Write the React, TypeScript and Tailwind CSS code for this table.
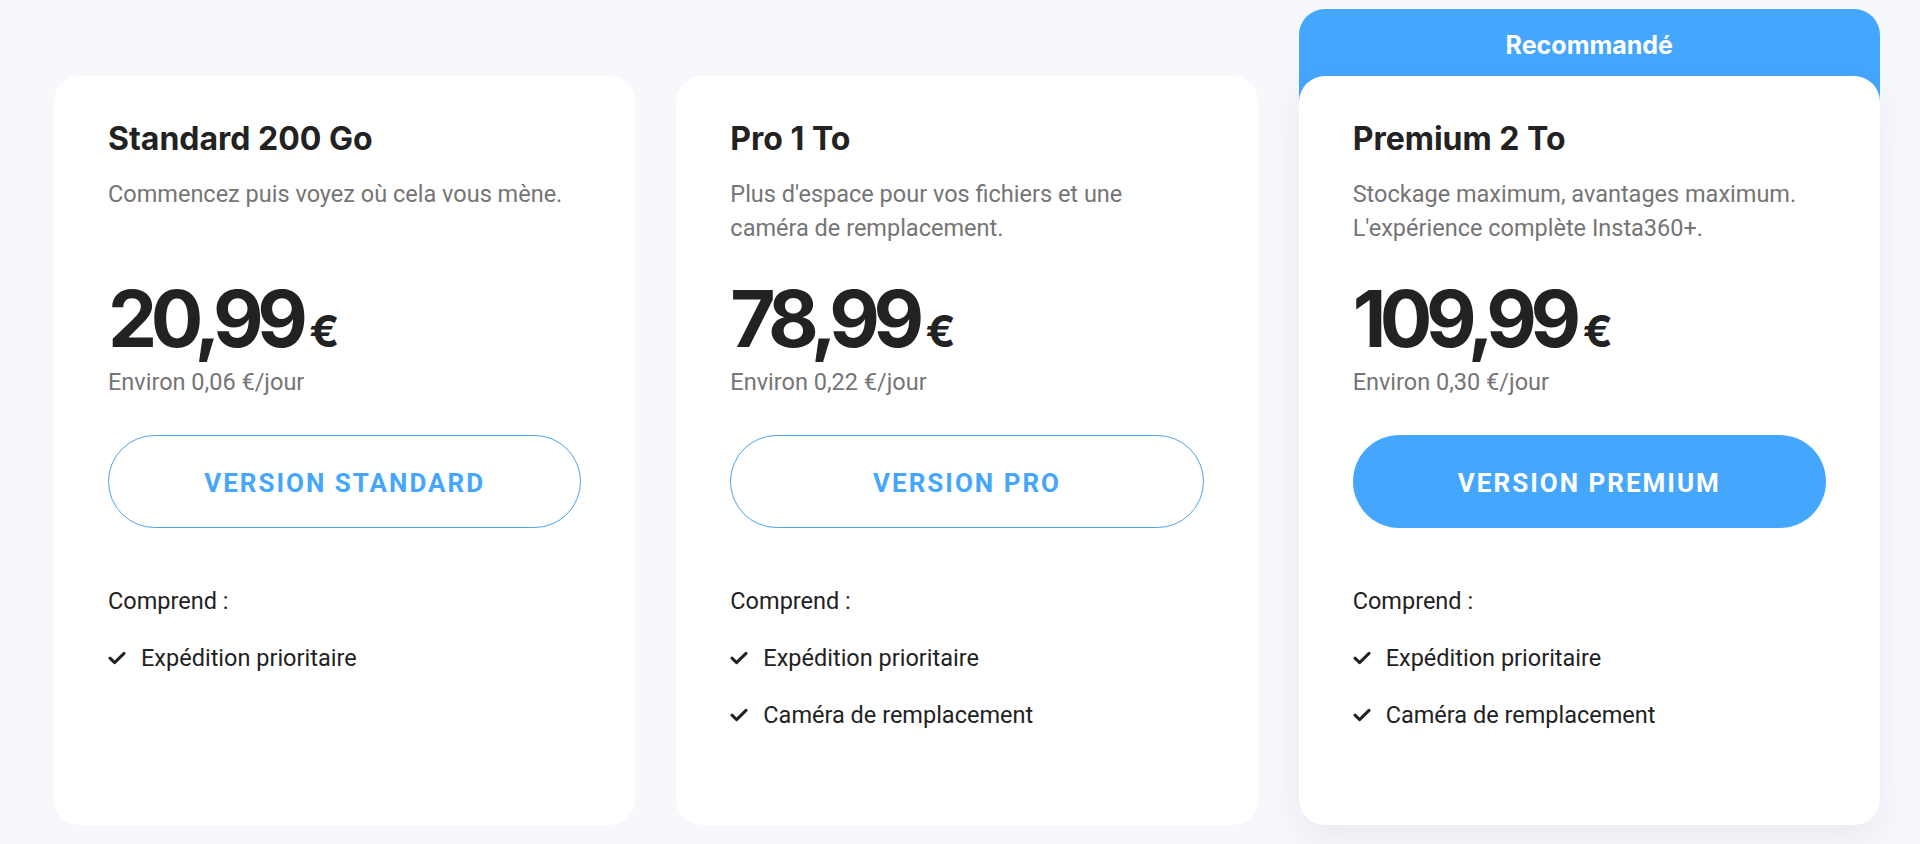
import React from "react";

const plans = [
  {
    id: 1,
    name: "Standard 200 Go",
    desc: "Commencez puis voyez où cela vous mène.",
    price: "20,99",
    perDay: "Environ 0,06 €/jour",
    cta: "VERSION STANDARD",
    features: ["Expédition prioritaire"],
    featured: false,
  },
  {
    id: 2,
    name: "Pro 1 To",
    desc: "Plus d'espace pour vos fichiers et une caméra de remplacement.",
    price: "78,99",
    perDay: "Environ 0,22 €/jour",
    cta: "VERSION PRO",
    features: ["Expédition prioritaire", "Caméra de remplacement"],
    featured: false,
  },
  {
    id: 3,
    name: "Premium 2 To",
    desc: "Stockage maximum, avantages maximum. L'expérience complète Insta360+.",
    price: "109,99",
    perDay: "Environ 0,30 €/jour",
    cta: "VERSION PREMIUM",
    features: ["Expédition prioritaire", "Caméra de remplacement"],
    featured: true,
  },
];

function Check() {
  return (
    <svg width="18" height="14" viewBox="0 0 18 14" fill="none" className="shrink-0">
      <path d="M2 7.2 L6.6 11.6 L16 2.4" stroke="#222" strokeWidth="3" strokeLinecap="round" strokeLinejoin="round" />
    </svg>
  );
}

type Plan = (typeof plans)[number];

function Card({ plan }: { plan: Plan }) {
  return (
    <div
      className={
        plan.featured
          ? "relative -mt-[26px] h-[749px] rounded-[26px] bg-white px-[54px] pt-[44px] shadow-[0_12px_36px_rgba(30,40,80,0.07)]"
          : "h-[749px] rounded-[26px] bg-white px-[54px] pt-[44px]"
      }
    >
      <h2 className="font-['Inter',sans-serif] text-[32px] leading-[38px] font-bold text-[#222]">{plan.name}</h2>
      <p className="mt-[19px] h-[68px] font-['Roboto',sans-serif] text-[23.5px] leading-[34px] text-[#757575]">
        {plan.desc}
      </p>
      <div className="mt-[35px] flex items-baseline font-['Inter',sans-serif] font-bold text-[#222]">
        <span className="text-[78px] leading-[78px] tracking-[-6.5px]">{plan.price}</span>
        <span className="ml-[8px] text-[44px] leading-none">€</span>
      </div>
      <div className="mt-[10px] font-['Roboto',sans-serif] text-[23.5px] leading-[28px] text-[#757575]">{plan.perDay}</div>
      <button
        className={
          plan.featured
            ? "mt-[39px] flex h-[93px] w-full items-center justify-center rounded-full bg-[#45a6fd] pt-[3px] font-['Roboto',sans-serif] text-[26px] font-bold tracking-[2px] text-white"
            : "mt-[39px] flex h-[93px] w-full items-center justify-center rounded-full border border-[#4ea3ef] bg-white pt-[3px] font-['Roboto',sans-serif] text-[26px] font-bold tracking-[2px] text-[#45a6fd]"
        }
      >
        {plan.cta}
      </button>
      <ul className="mt-[59px] flex flex-col gap-[29px] font-['Roboto',sans-serif] text-[23.5px] leading-[28px] text-[#222]">
        <li>Comprend :</li>
        {plan.features.map((f) => (
          <li key={f} className="flex items-center gap-[15px]">
            <Check />
            <span>{f}</span>
          </li>
        ))}
      </ul>
    </div>
  );
}

export default function App() {
  return (
    <div className="flex h-[844px] w-full items-end gap-[41px] bg-[#f7f8fc] pl-[54px] pr-[40px] pb-[19px]">
      {plans.map((plan) => (
        <div key={plan.id} className="flex flex-1 flex-col">
          {plan.featured && (
            <div className="flex h-[93px] justify-center rounded-t-[26px] bg-[#45a6fd] pt-[21px] font-['Inter',sans-serif] text-[25px] leading-[30px] font-bold text-white">
              Recommandé
            </div>
          )}
          <Card plan={plan} />
        </div>
      ))}
    </div>
  );
}
